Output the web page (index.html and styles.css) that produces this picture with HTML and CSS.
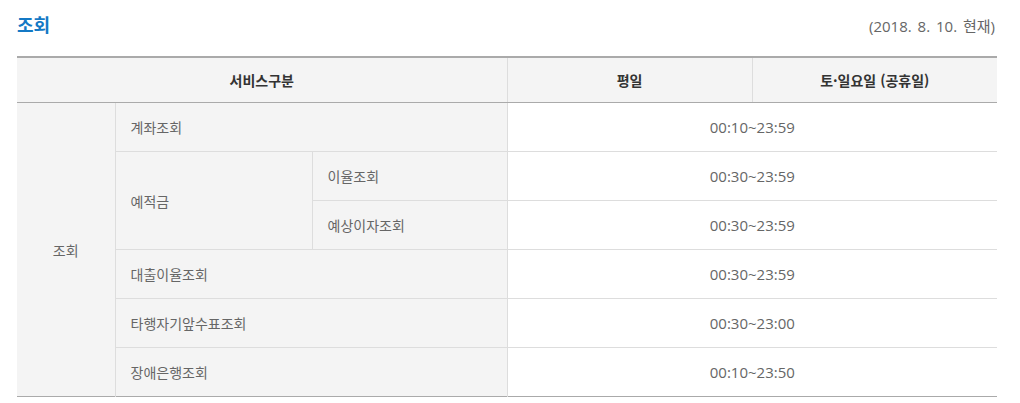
FILE: index.html
```html
<!DOCTYPE html>
<html lang="ko">
<head>
<meta charset="utf-8">
<link rel="stylesheet" href="styles.css">
</head>
<body>
<div class="page">
  <div class="head">
    <h2 class="title">조회</h2>
    <span class="date">(2018. 8. 10. 현재)</span>
  </div>
  <table class="tbl">
    <colgroup>
      <col class="c1"><col class="c2"><col class="c3"><col class="c4"><col class="c5">
    </colgroup>
    <thead>
      <tr>
        <th colspan="3">서비스구분</th>
        <th>평일</th>
        <th>토·일요일 (공휴일)</th>
      </tr>
    </thead>
    <tbody>
      <tr>
        <td rowspan="6" class="grp">조회</td>
        <td colspan="2" class="name">계좌조회</td>
        <td colspan="2" class="time">00:10~23:59</td>
      </tr>
      <tr>
        <td rowspan="2" class="name">예적금</td>
        <td class="name">이율조회</td>
        <td colspan="2" class="time">00:30~23:59</td>
      </tr>
      <tr>
        <td class="name">예상이자조회</td>
        <td colspan="2" class="time">00:30~23:59</td>
      </tr>
      <tr>
        <td colspan="2" class="name">대출이율조회</td>
        <td colspan="2" class="time">00:30~23:59</td>
      </tr>
      <tr>
        <td colspan="2" class="name">타행자기앞수표조회</td>
        <td colspan="2" class="time">00:30~23:00</td>
      </tr>
      <tr>
        <td colspan="2" class="name">장애은행조회</td>
        <td colspan="2" class="time">00:10~23:50</td>
      </tr>
    </tbody>
  </table>
</div>
</body>
</html>
```
FILE: styles.css
```css
html, body {
  margin: 0;
  padding: 0;
  background: #fff;
}
body {
  font-family: "Noto Sans CJK KR", "Noto Sans", sans-serif;
  color: #666;
}
.page {
  width: 980px;
  padding-left: 17px;
}
.head {
  height: 56px;
  display: flex;
  justify-content: space-between;
  align-items: flex-start;
}
.title {
  margin: 0;
  padding-top: 11px;
  font-size: 18px;
  line-height: 26px;
  font-weight: 700;
  color: #1479c5;
}
.date {
  padding-top: 15px;
  padding-right: 2px;
  font-family: "Open Sans", "Noto Sans CJK KR", sans-serif;
  font-size: 15px;
  line-height: 22px;
  word-spacing: 2px;
  color: #666;
}
.tbl {
  width: 980px;
  border-collapse: collapse;
  table-layout: fixed;
  border-top: 2px solid #aaa;
  border-bottom: 1px solid #aaa;
  font-size: 14px;
}
.c1 { width: 98px; }
.c2 { width: 197px; }
.c3 { width: 195px; }
.c4 { width: 245px; }
.c5 { width: 245px; }
.tbl th {
  height: 44px;
  padding: 0;
  background: #f4f4f4;
  color: #333;
  font-weight: 700;
  text-align: center;
  border-bottom: 1px solid #aaa;
  border-left: 1px solid #ddd;
}
.tbl th:first-child { border-left: 0; }
.tbl td {
  height: 48px;
  padding: 0;
  border-top: 1px solid #ddd;
  border-left: 1px solid #ddd;
  vertical-align: middle;
}
.tbl td.grp {
  border-left: 0;
  background: #f4f4f4;
  text-align: center;
}
.tbl td.name {
  background: #f4f4f4;
  padding-left: 15px;
  text-align: left;
}
.tbl td.time {
  background: #fff;
  text-align: center;
  font-family: "Open Sans", "Noto Sans CJK KR", sans-serif;
  font-size: 15px;
}
```
